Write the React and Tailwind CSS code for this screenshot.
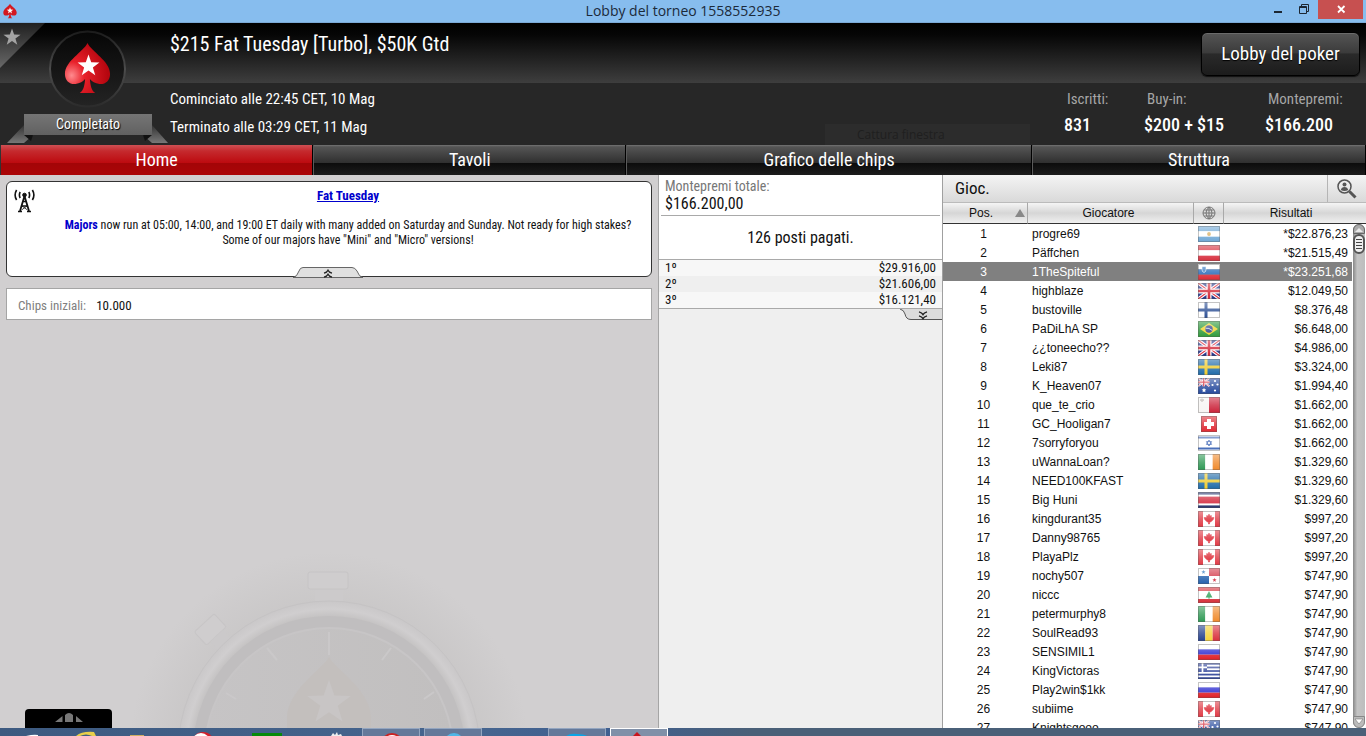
import React from "react";

const COND = "font-['Roboto_Condensed','Liberation_Sans_Narrow','Liberation_Sans',sans-serif]";

function starPoints(cx, cy, r, inner = 0.4) {
  const pts = [];
  for (let i = 0; i < 10; i++) {
    const a = -Math.PI / 2 + (i * Math.PI) / 5;
    const q = i % 2 ? r * inner : r;
    pts.push((cx + q * Math.cos(a)).toFixed(2) + "," + (cy + q * Math.sin(a)).toFixed(2));
  }
  return pts.join(" ");
}

const SPADE =
  "M87.5 43 C92 52 111 61 111 74 C111 81 106 84.5 100 84 C95.5 83.5 92 81.5 90 79 C90.5 86 92 91 95.5 93 H79.5 C83 91 84.5 86 85 79 C83 81.5 79.5 83.5 75 84 C69 84.5 64 81 64 74 C64 61 83 52 87.5 43 Z";

function MiniSpade({ className }) {
  return (
    <svg className={className} viewBox="63 42 49 52" aria-hidden="true">
      <path d={SPADE} fill="#d31820" />
      <polygon points={starPoints(87.5, 67, 12)} fill="#fff" />
    </svg>
  );
}

/* ---------- flags ---------- */
const H = ({ c }) => c.map((f, i) => <rect key={i} x="0" y={(16 / c.length) * i} width="22" height={16 / c.length} fill={f} />);
const V = ({ c }) => c.map((f, i) => <rect key={i} x={(22 / c.length) * i} y="0" width={22 / c.length} height="16" fill={f} />);

function UnionJack() {
  return (
    <g>
      <rect width="22" height="16" fill="#1f2f86" />
      <path d="M0 0L22 16M22 0L0 16" stroke="#fff" strokeWidth="3.4" />
      <path d="M0 0L22 16M22 0L0 16" stroke="#d23" strokeWidth="1.1" />
      <path d="M11 0V16M0 8H22" stroke="#fff" strokeWidth="5" />
      <path d="M11 0V16M0 8H22" stroke="#d22535" strokeWidth="2.6" />
    </g>
  );
}

function Cross({ bg, fg }) {
  return (
    <g>
      <rect width="22" height="16" fill={bg} />
      <path d="M8 0V16M0 8H22" stroke={fg} strokeWidth="3" />
    </g>
  );
}

const FLAGS = {
  ar: <g><H c={["#6fa8d6", "#fff", "#6fa8d6"]} /><circle cx="11" cy="8" r="1.9" fill="#d9b36a" /></g>,
  at: <H c={["#d8303f", "#fff", "#d8303f"]} />,
  si: <g><H c={["#fff", "#2468b8", "#dd2a35"]} /><path d="M4 2.5H8V5.5Q8 8 6 8.5Q4 8 4 5.5Z" fill="#3b7cc4" stroke="#fff" strokeWidth=".6" /></g>,
  gb: <UnionJack />,
  fi: <Cross bg="#fff" fg="#2c4f94" />,
  se: <Cross bg="#1e6aa8" fg="#f0cb2c" />,
  br: <g><rect width="22" height="16" fill="#2f9a3b" /><path d="M11 2L20 8L11 14L2 8Z" fill="#f1d32e" /><circle cx="11" cy="8" r="3.7" fill="#34458f" /><path d="M7.6 7.2Q11 6.6 14.2 9.4" stroke="#fff" strokeWidth=".8" fill="none" /></g>,
  au: (
    <g>
      <rect width="22" height="16" fill="#24489c" />
      <g transform="scale(.52)"><UnionJack /></g>
      <polygon points={starPoints(6, 12.2, 2.4, 0.5)} fill="#fff" />
      {[[17, 3], [14.5, 7], [19.5, 6.5], [17, 12.5]].map(([x, y]) => <circle key={x + "-" + y} cx={x} cy={y} r="1.1" fill="#fff" />)}
    </g>
  ),
  mt: <g><V c={["#f7f5f3", "#cb2239"]} /><path d="M2 3H6M4 1.5V5" stroke="#b8b2ac" strokeWidth="1.3" /></g>,
  ch: <g><rect x="3" width="16" height="16" fill="#e02832" /><path d="M11 3V13M6 8H16" stroke="#fff" strokeWidth="4" /></g>,
  il: <g><rect width="22" height="16" fill="#fff" /><path d="M0 2.5H22M0 13.5H22" stroke="#3f66b5" strokeWidth="2" /><path d="M11 5L13.6 9.4H8.4ZM11 11L8.4 6.6H13.6Z" fill="none" stroke="#3f66b5" strokeWidth=".9" /></g>,
  ie: <V c={["#2f9a55", "#fff", "#f08a2c"]} />,
  cr: <g><rect width="22" height="16" fill="#26346f" /><rect y="2.6" width="22" height="10.8" fill="#fff" /><rect y="4.6" width="22" height="6.8" fill="#d3263a" /></g>,
  ca: <g><rect width="22" height="16" fill="#e03a45" /><rect x="5" width="12" height="16" fill="#fff" /><path d="M11 3L12.2 5L13.4 4.6L13.2 6.6L16 6.6L15.2 8.6L13 10.8L11.4 11V13H10.6V11L9 10.8L6.8 8.6L6 6.6L8.8 6.6L8.6 4.6L9.8 5Z" fill="#dc2430" stroke="#dc2430" strokeWidth=".6" /></g>,
  pa: <g><rect width="22" height="16" fill="#fff" /><rect x="11" width="11" height="8" fill="#d43a4a" /><rect y="8" width="11" height="8" fill="#2460ad" /><polygon points={starPoints(5.5, 4, 2.3)} fill="#2f77bd" /><polygon points={starPoints(16.5, 12, 2.3)} fill="#d22f40" /></g>,
  lb: <g><rect width="22" height="16" fill="#d62f3a" /><rect y="4" width="22" height="8" fill="#fff" /><path d="M11 4L14.4 10.4H11.5V11.8H10.5V10.4H7.6Z" fill="#31a05a" /></g>,
  ro: <V c={["#26418f", "#f6d23a", "#d9303c"]} />,
  ru: <H c={["#fff", "#2a2ad0", "#e01f26"]} />,
  gr: (
    <g>
      <rect width="22" height="16" fill="#fff" />
      {[0, 2, 4, 6, 8].map((i) => <rect key={i} y={i * 1.78} width="22" height="1.78" fill="#2a3f96" />)}
      <rect width="9" height="8.9" fill="#2a3f96" />
      <path d="M4.5 0V8.9M0 4.45H9" stroke="#fff" strokeWidth="1.7" />
    </g>
  ),
};

function Flag({ code }) {
  return (
    <svg className="mx-auto block h-4 w-[22px]" viewBox="0 0 22 16" role="img" aria-label={code}>
      {FLAGS[code]}
      <rect x={code === "ch" ? 3 : 0} width={code === "ch" ? 16 : 22} height="16" fill="url(#gloss)" />
      <rect x={code === "ch" ? 3.5 : 0.5} y=".5" width={code === "ch" ? 15 : 21} height="15" fill="none" stroke="#555" strokeOpacity=".35" />
    </svg>
  );
}

const PLAYERS = [
  ["progre69", "ar", "*$22.876,23"],
  ["Päffchen", "at", "*$21.515,49"],
  ["1TheSpiteful", "si", "*$23.251,68"],
  ["highblaze", "gb", "$12.049,50"],
  ["bustoville", "fi", "$8.376,48"],
  ["PaDiLhA SP", "br", "$6.648,00"],
  ["¿¿toneecho??", "gb", "$4.986,00"],
  ["Leki87", "se", "$3.324,00"],
  ["K_Heaven07", "au", "$1.994,40"],
  ["que_te_crio", "mt", "$1.662,00"],
  ["GC_Hooligan7", "ch", "$1.662,00"],
  ["7sorryforyou", "il", "$1.662,00"],
  ["uWannaLoan?", "ie", "$1.329,60"],
  ["NEED100KFAST", "se", "$1.329,60"],
  ["Big Huni", "cr", "$1.329,60"],
  ["kingdurant35", "ca", "$997,20"],
  ["Danny98765", "ca", "$997,20"],
  ["PlayaPlz", "ca", "$997,20"],
  ["nochy507", "pa", "$747,90"],
  ["niccc", "lb", "$747,90"],
  ["petermurphy8", "ie", "$747,90"],
  ["SoulRead93", "ro", "$747,90"],
  ["SENSIMIL1", "ru", "$747,90"],
  ["KingVictoras", "gr", "$747,90"],
  ["Play2win$1kk", "ru", "$747,90"],
  ["subiime", "ca", "$747,90"],
  ["Knightsgooo", "au", "$747,90"],
];

function TitleBar() {
  return (
    <div className="relative flex h-[23px] shrink-0 items-center justify-center border-b border-[#7ba9d6] bg-[#87bdee] font-['Open_Sans',sans-serif] text-[14px] leading-[22px] text-[#1b2a3a]">
      <MiniSpade className="absolute left-[3px] top-[3px] h-4 w-[14px]" />
      <h1>Lobby del torneo 1558552935</h1>
      <div className="absolute right-[3px] top-0 flex h-[19px]">
        <button type="button" aria-label="Riduci a icona" className="w-[26px]">
          <svg className="mx-auto block h-[19px] w-[14px]" viewBox="0 0 14 19"><path d="M4 12H12" stroke="#1c2733" strokeWidth="2" /></svg>
        </button>
        <button type="button" aria-label="Ripristina" className="w-[28px]">
          <svg className="mx-auto block h-[19px] w-[14px]" viewBox="0 0 14 19" fill="none" stroke="#1c2733"><path d="M2.500 6.500H9.500V13.500H2.500ZM2 7.500H10M4.500 6V4.500H11.500V11.500H10" /></svg>
        </button>
        <button type="button" aria-label="Chiudi" className="w-[45px] bg-[#c75050]">
          <svg className="mx-auto block h-[19px] w-[14px]" viewBox="0 0 14 19"><path d="M4 6L10.500 12.500M10.500 6L4 12.500" stroke="#fff" strokeWidth="1.8" /></svg>
        </button>
      </div>
    </div>
  );
}

function Emblem() {
  return (
    <div className="relative w-[170px] shrink-0">
      <svg className="block h-[122px] w-[170px]" viewBox="0 23 170 122" aria-hidden="true">
        <defs>
          <linearGradient id="corner" x1="0" y1="0" x2="0" y2="1"><stop offset="0" stopColor="#202020" /><stop offset="1" stopColor="#686868" /></linearGradient>
          <linearGradient id="disc" x1="0" y1="0" x2="0" y2="1"><stop offset="0" stopColor="#060606" /><stop offset="1" stopColor="#242424" /></linearGradient>
          <linearGradient id="ring" x1="0" y1="0" x2="0" y2="1"><stop offset="0" stopColor="#1c1c1c" /><stop offset=".5" stopColor="#4c4c4c" /><stop offset="1" stopColor="#2c2c2c" /></linearGradient>
          <radialGradient id="red" cx=".15" cy=".65" r=".8"><stop offset="0" stopColor="#ff8a8e" /><stop offset=".35" stopColor="#e8202a" /><stop offset="1" stopColor="#b5060f" /></radialGradient>
          <linearGradient id="ribbon" x1="0" y1="0" x2="0" y2="1"><stop offset="0" stopColor="#757575" /><stop offset="1" stopColor="#616161" /></linearGradient>
          <linearGradient id="fold" x1="0" y1="0" x2="0" y2="1"><stop offset="0" stopColor="#333" /><stop offset="1" stopColor="#777" /></linearGradient>
        </defs>
        <path d="M0 23H45L0 68Z" fill="url(#corner)" />
        <polygon points={starPoints(12, 37.5, 9)} fill="#a3a3a3" />
        <circle cx="87.5" cy="69" r="37.5" fill="url(#disc)" stroke="url(#ring)" strokeWidth="2" />
        <path d={SPADE} fill="url(#red)" transform="translate(3.5 0) scale(.96 1)" />
        <polygon points={starPoints(88.5, 66, 11.5)} fill="#fff" />
        <path d="M24 125L7 143H24L33 135Z" fill="url(#fold)" />
        <path d="M152 125L168 143H152L143 135Z" fill="url(#fold)" />
        <path d="M24 135H33L31 141ZM152 135H143L145 141Z" fill="#111" />
        <rect x="24" y="114" width="128" height="21" fill="url(#ribbon)" />
      </svg>
      <p className="absolute left-6 top-[91px] w-32 text-center text-[14px] leading-[21px] text-white [text-shadow:1px_1px_1px_#000]">Completato</p>
    </div>
  );
}

function Header() {
  return (
    <header className={`${COND} flex h-[122px] shrink-0 bg-[linear-gradient(to_bottom,#000_0,#060606_12px,#3e3e3e_60px,#272727_60px,#272727_100%)] text-white`}>
      <Emblem />
      <div className="relative flex flex-1 flex-col">
        <h2 className="h-[60px] pt-[9px] text-[20px] leading-6">$215 Fat Tuesday [Turbo], $50K Gtd</h2>
        <p className="pt-[2px] text-[15px] leading-7">Cominciato alle 22:45 CET, 10 Mag</p>
        <p className="text-[15px] leading-7">Terminato alle 03:29 CET, 11 Mag</p>
        <div className="absolute bottom-0 right-[34px] h-[21px] w-[205px] bg-[#2c2c2c] pl-8 font-['Open_Sans',sans-serif] text-[12px] leading-[21px] text-[#1f1f1f]">Cattura finestra</div>
      </div>
      <div className="flex flex-col items-end">
        <div className="h-[60px] pr-[6px] pt-[9px]">
          <button type="button" className="h-[44px] w-[159px] rounded-md border border-black bg-[linear-gradient(to_bottom,#555_0,#3b3b3b_47%,#2a2a2a_50%,#1c1c1c_100%)] text-[19px] shadow-[inset_0_1px_0_#6b6b6b,0_1px_1px_#111] [text-shadow:0_1px_1px_#000]">Lobby del poker</button>
        </div>
        <dl className="flex pt-1">
          {[["Iscritti:", "831", "w-20"], ["Buy-in:", "$200 + $15", "w-[121px]"], ["Montepremi:", "$166.200", "w-[101px]"]].map(([k, v, w]) => (
            <div key={k} className={w}>
              <dt className="pl-[3px] text-[15px] leading-6 text-[#a6a6a6]">{k}</dt>
              <dd className="pt-[2px] text-[18px] font-medium leading-6">{v}</dd>
            </div>
          ))}
        </dl>
      </div>
    </header>
  );
}

function Tabs() {
  const tabs = [["Home", "flex-[313]"], ["Tavoli", "flex-[313]"], ["Grafico delle chips", "flex-[406]"], ["Struttura", "flex-[334]"]];
  return (
    <nav className={`${COND} flex h-[30px] shrink-0 text-[18px] leading-[30px] text-white [text-shadow:1px_1px_1px_#000]`}>
      {tabs.map(([t, w], i) => (
        <button
          key={t}
          type="button"
          className={`${w} border-r border-black ${i === 0 ? "border-l border-l-[#333] bg-[linear-gradient(to_bottom,#cf5054_0,#c52a2e_20%,#bd0a0f_60%,#a30507_61%,#ab0507_100%)]" : "border-l border-l-[#5a5a5a] bg-[linear-gradient(to_bottom,#757575_0,#555_6%,#2f2f2f_60%,#0c0c0c_61%,#1c1c1c_100%)]"}`}
        >
          {t}
        </button>
      ))}
    </nav>
  );
}

function Stopwatch() {
  return (
    <svg className="pointer-events-none absolute bottom-0 left-[120px] h-[190px] w-[430px]" viewBox="120 538 430 190" aria-hidden="true">
      <defs>
        <radialGradient id="halo" cx="329" cy="752" r="200" gradientUnits="userSpaceOnUse"><stop offset=".74" stopColor="#c5c3c3" /><stop offset="1" stopColor="#c5c3c3" stopOpacity="0" /></radialGradient>
        <radialGradient id="rim" cx="329" cy="752" r="152" gradientUnits="userSpaceOnUse"><stop offset=".88" stopColor="#c2c0c0" /><stop offset=".94" stopColor="#d0cecf" /><stop offset="1" stopColor="#c9c7c8" /></radialGradient>
        <linearGradient id="face" x1="0" y1="0" x2="1" y2="0"><stop offset="0" stopColor="#c6c4c5" /><stop offset="1" stopColor="#c1bfbf" /></linearGradient>
      </defs>
      <circle cx="329" cy="752" r="200" fill="url(#halo)" opacity=".6" />
      <rect x="315" y="588" width="28" height="16" fill="#cccacb" />
      <rect x="308" y="572" width="40" height="17" rx="2" fill="#cfcdce" stroke="#c6c4c5" />
      <g transform="rotate(-43 212 632)"><rect x="199" y="620" width="27" height="18" rx="2" fill="#cfcdce" stroke="#c7c5c6" /><rect x="204" y="638" width="17" height="12" fill="#cbc9ca" /></g>
      <circle cx="329" cy="752" r="151" fill="url(#rim)" stroke="#c5c3c4" />
      <circle cx="329" cy="752" r="136" fill="#c0bebf" />
      <circle cx="329" cy="752" r="124" fill="url(#face)" stroke="#c7c5c6" strokeWidth="2" />
      <path d="M329 632V655M267 648L277 660M391 648L382 660M226 693L236 699M434 692L424 699" stroke="#cac8c9" strokeWidth="2" />
      <path d="M329 657C334 668 371 690 371 718V728H287V718C287 690 324 668 329 657Z" fill="#c3bfbd" />
      <polygon points={starPoints(329, 703, 23)} fill="#c8c5c5" />
    </svg>
  );
}

function Chevrons({ up }) {
  return (
    <svg className="mx-auto block h-[9px] w-3" viewBox="0 0 12 9" fill="none" stroke="#222" strokeWidth="1.3">
      <path d={up ? "M2 4.200Q5 3.400 6 1.200Q7 3.400 10 4.200M2 8.200Q5 7.400 6 5.200Q7 7.400 10 8.200" : "M2 .8Q5 1.600 6 3.600Q7 1.600 10 .8M2 4.800Q5 5.600 6 7.600Q7 5.600 10 4.800"} />
    </svg>
  );
}

function LeftPanel() {
  return (
    <section className={`${COND} relative flex flex-col overflow-hidden bg-[#d1cfd0] p-[6px] text-[13px] text-[#111]`}>
      <Stopwatch />
      <div className="relative h-24 rounded-md border border-[#333] bg-white pl-[38px] text-center leading-[15px]">
        <svg className="absolute left-[7px] top-[7px] h-6 w-[21px]" viewBox="0 0 21 24" fill="none" stroke="#111" aria-hidden="true">
          <path d="M10.500 7L6 22M10.500 7L15 22" strokeWidth="1.800" />
          <path d="M9 12.500H12M7.500 17H13.500M4 22.500H8M13 22.500H17" strokeWidth="1.300" />
          <path d="M7.500 21L13 17M13.500 21L8 17" strokeWidth=".8" />
          <circle cx="10.500" cy="6" r="1.800" fill="#111" />
          <path d="M6.200 3Q4.600 6 6.200 9M14.800 3Q16.400 6 14.800 9M2.600 1Q-.4 6 2.600 11M18.400 1Q21.400 6 18.400 11" strokeWidth="1.600" />
        </svg>
        <p className="pt-[6px]"><a href="#fat-tuesday" className="font-bold text-[#0000cc] underline">Fat Tuesday</a></p>
        <p className="whitespace-nowrap pt-[15px] text-[12px]">
          <a href="#majors" className="font-bold text-[#0000cc]">Majors</a> now run at 05:00, 14:00, and 19:00 ET daily with many added on Saturday and Sunday. Not ready for high stakes?
          <br />
          Some of our majors have "Mini" and "Micro" versions!
        </p>
        <button type="button" aria-label="Comprimi" className="absolute -bottom-[2px] left-[286px] h-[11px] w-[70px]">
          <svg className="absolute inset-0 h-[11px] w-[70px]" viewBox="0 0 70 11">
            <path d="M0 10.500Q4 10 6 4Q7 .5 10 .5H59Q62 .5 64 4Q66 10 70 10.500Z" fill="#e0e0e0" stroke="#666" />
          </svg>
          <span className="relative block pt-px"><Chevrons up /></span>
        </button>
      </div>
      <dl className="relative mt-[11px] flex h-8 items-center gap-[10px] border border-[#a5a5a5] bg-white px-[11px] pt-1 text-[13px]">
        <dt className="text-[#808080]">Chips iniziali:</dt>
        <dd>10.000</dd>
      </dl>
      <button type="button" aria-label="Apri menu" className="absolute bottom-0 left-[25px] h-[19px] w-[87px] rounded-t bg-black">
        <svg className="mx-auto block h-[19px] w-[30px]" viewBox="0 0 30 19" fill="#777"><path d="M1 13L8.500 7V13ZM11 13V6Q15 2 19 6V13ZM22 7L29 13H22Z" /></svg>
      </button>
    </section>
  );
}

function PrizePanel() {
  return (
    <section className={`${COND} flex flex-col border-l border-[#a5a5a5] bg-[#efefef] text-[#111]`}>
      <div className="bg-white">
        <div className="mx-[2px] h-[41px] border-b border-[#a9a9a9] pl-1 pt-[3px]">
          <p className="text-[14px] leading-[17px] text-[#777]">Montepremi totale:</p>
          <p className="text-[16px] leading-[17px]">$166.200,00</p>
        </div>
        <p className="h-[43px] text-center text-[16px] leading-[43px]">126 posti pagati.</p>
        <table className="w-full border-y border-[#a9a9a9] text-[13px] leading-4">
          <tbody>
            {[["1º", "$29.916,00"], ["2º", "$21.606,00"], ["3º", "$16.121,40"]].map(([a, b]) => (
              <tr key={a} className="h-4 bg-[#f7f7f7] even:bg-[#efefef]">
                <td className="p-0 pl-[6px]">{a}</td>
                <td className="p-0 pr-[6px] text-right">{b}</td>
              </tr>
            ))}
          </tbody>
        </table>
      </div>
      <button type="button" aria-label="Espandi" className="relative h-[11px] w-[42px] self-end">
        <svg className="absolute inset-0 h-[11px] w-[42px]" viewBox="0 0 42 11"><path d="M0 0Q4 1 5 5Q6 10.500 11 10.500H42V0Z" fill="#dcdcdc" /><path d="M0 0Q4 1 5 5Q6 10.500 11 10.500H42" fill="none" stroke="#555" /></svg>
        <span className="relative block pl-1 pt-px"><Chevrons /></span>
      </button>
    </section>
  );
}

function PlayersPanel() {
  const th = "border-r border-[#a9a9a9] p-0 font-normal";
  return (
    <section className="flex min-h-0 flex-col border-l border-[#a0a0a0] bg-white font-['Liberation_Sans',Arial,sans-serif] text-[12px] text-[#111]">
      <div className="flex h-[27px] shrink-0 bg-[linear-gradient(to_bottom,#f4f4f4,#d9d9d9)]">
        <h3 className={`${COND} flex-1 pl-3 text-[17px] leading-[27px]`}>Gioc.</h3>
        <button type="button" aria-label="Cerca giocatore" className="w-[39px] border-l border-[#b5b5b5]">
          <svg className="mx-auto block h-[22px] w-[22px]" viewBox="0 0 22 22" fill="none" stroke="#555">
            <circle cx="8.500" cy="8.500" r="6.500" strokeWidth="1.500" />
            <circle cx="8.500" cy="6.500" r="2" fill="#555" stroke="none" />
            <path d="M4.800 12Q5.500 9 8.500 9Q11.500 9 12.200 12Q8.500 14 4.800 12Z" fill="#555" stroke="none" />
            <path d="M13.500 13.500L19.500 19.500" strokeWidth="3" />
          </svg>
        </button>
      </div>
      <div className="relative min-h-0 flex-1 overflow-hidden">
        <table className="w-full table-fixed border-separate border-spacing-0">
          <colgroup><col className="w-[85px]" /><col /><col className="w-[30px]" /><col className="w-[142px]" /></colgroup>
          <thead>
            <tr className="h-[22px] bg-[linear-gradient(to_bottom,#f8f8f8_0,#d6d6d6_50%,#f2f2f2_100%)] [&>th]:border-b [&>th]:border-b-[#333] [&>th]:border-t [&>th]:border-t-[#bbb]">
              <th className={th}>
                <span className="relative block pr-2">
                  Pos.
                  <svg className="absolute right-[2px] top-[5px] h-2 w-[10px]" viewBox="0 0 10 8"><path d="M5 0L10 8H0Z" fill="#888" /></svg>
                </span>
              </th>
              <th className={`${th} pr-1`}>Giocatore</th>
              <th className={th}>
                <svg className="mx-auto block h-[14px] w-[14px]" viewBox="0 0 14 14" fill="none" stroke="#777" role="img" aria-label="Paese"><circle cx="7" cy="7" r="6" /><path d="M7 1V13M1 7H13M2 4H12M2 10H12M7 1Q1 7 7 13M7 1Q13 7 7 13" /></svg>
              </th>
              <th className="p-0 pr-2 font-normal">Risultati</th>
            </tr>
          </thead>
          <tbody>
            {PLAYERS.map(([name, flag, prize], i) => (
              <tr key={name} className={i === 2 ? "h-[19px] bg-[#808080] text-white" : "h-[19px]"}>
                <td className="p-0 pr-1 text-center">{i + 1}</td>
                <td className="p-0 pl-1">{name}</td>
                <td className="p-0"><Flag code={flag} /></td>
                <td className="p-0 pr-[18px] text-right">{prize}</td>
              </tr>
            ))}
          </tbody>
        </table>
        <div className="absolute bottom-0 right-0 top-[22px] w-[14px] bg-white pl-px">
          <div className="flex h-full w-3 flex-col justify-between rounded-md bg-[linear-gradient(to_right,#888,#c4c4c4_35%,#bdbdbd)]">
            <div>
              <button type="button" aria-label="Scorri su" className="block h-[10px] w-3 rounded-t-md border border-[#666] bg-[#aaa]">
                <svg className="block h-2 w-[10px]" viewBox="0 0 10 8"><path d="M5 3L9 7H1Z" fill="#e9e9e9" /></svg>
              </button>
              <div className="flex h-5 w-3 flex-col justify-center gap-[2px] rounded-md border-2 border-[#555] bg-[#eee] px-px">
                <i className="h-px bg-[#444]" /><i className="h-px bg-[#444]" /><i className="h-px bg-[#444]" /><i className="h-px bg-[#444]" />
              </div>
            </div>
            <button type="button" aria-label="Scorri giù" className="block h-3 w-3 rounded-b-md border border-[#888] bg-[#bbb]">
              <svg className="block h-[10px] w-[10px]" viewBox="0 0 10 10"><path d="M1 2H9L5 7Z" fill="#fff" stroke="#777" strokeWidth=".6" /></svg>
            </button>
          </div>
        </div>
      </div>
    </section>
  );
}

function Taskbar() {
  const open = "border border-b-0 border-[#93a5bf] bg-[#64799a]";
  const icons = [
    ["Esplora", "", <path d="M26 8Q34 6 38 7V8Z" fill="#fff" />],
    ["Internet", "", <path d="M24 8Q30 3 42 4L44 8H40Q34 5 28 8Z" fill="#e8cf4a" />],
    ["Cartelle", "", <rect x="16" y="7" width="14" height="1" fill="#cfae62" />],
    ["Browser", "", <g><circle cx="27" cy="15" r="11" fill="#d3202c" /><circle cx="25" cy="14" r="9" fill="#fff" /></g>],
    ["Foglio", "", <rect x="14" y="5" width="30" height="3" fill="#078a0a" />],
    ["Impostazioni", "", <path d="M31 8L33 5L35 7L37 4L38 7L41 6L42 8Z" fill="#eee" />],
    ["Musica", open, <g><circle cx="29" cy="15" r="11" fill="#c22" /><circle cx="29" cy="15" r="9" fill="#fff" /></g>],
    ["Rete", open, <circle cx="29" cy="14" r="10" fill="#4fb6e6" />],
    ["", "", null],
    ["Chat", open, <path d="M16 8Q20 4 28 5Q36 5 40 8Z" fill="#0aa5e6" />],
    ["Poker", "border border-b-0 border-white bg-[#8090a8]", <path d="M26 3L31 8H21Z" fill="#c9141c" />],
  ];
  return (
    <footer className="flex h-2 shrink-0 gap-1 overflow-hidden bg-[linear-gradient(to_right,#3d5a80,#46658f_35%,#3f5f90_45%,#4a6078_55%,#4a6078)]">
      {icons.map(([label, cls, drawing], i) =>
        label ? (
          <button key={i} type="button" aria-label={label} className={`h-2 shrink-0 overflow-hidden ${i === 0 ? "w-12" : "w-[58px]"} ${cls}`}>
            <svg className="block h-2 w-[58px]" viewBox="0 0 58 8">{drawing}</svg>
          </button>
        ) : (
          <span key={i} className="w-[58px] shrink-0" />
        )
      )}
    </footer>
  );
}

export default function App() {
  return (
    <div className="flex h-screen flex-col overflow-hidden">
      <svg className="absolute h-0 w-0" aria-hidden="true">
        <defs><linearGradient id="gloss" x1="0" y1="0" x2="0" y2="1"><stop offset="0" stopColor="#fff" stopOpacity=".45" /><stop offset=".5" stopColor="#fff" stopOpacity=".2" /><stop offset="1" stopColor="#fff" stopOpacity="0" /></linearGradient></defs>
      </svg>
      <TitleBar />
      <Header />
      <Tabs />
      <main className="grid min-h-0 flex-1 grid-cols-[1fr_284px_424px]">
        <LeftPanel />
        <PrizePanel />
        <PlayersPanel />
      </main>
      <Taskbar />
    </div>
  );
}
